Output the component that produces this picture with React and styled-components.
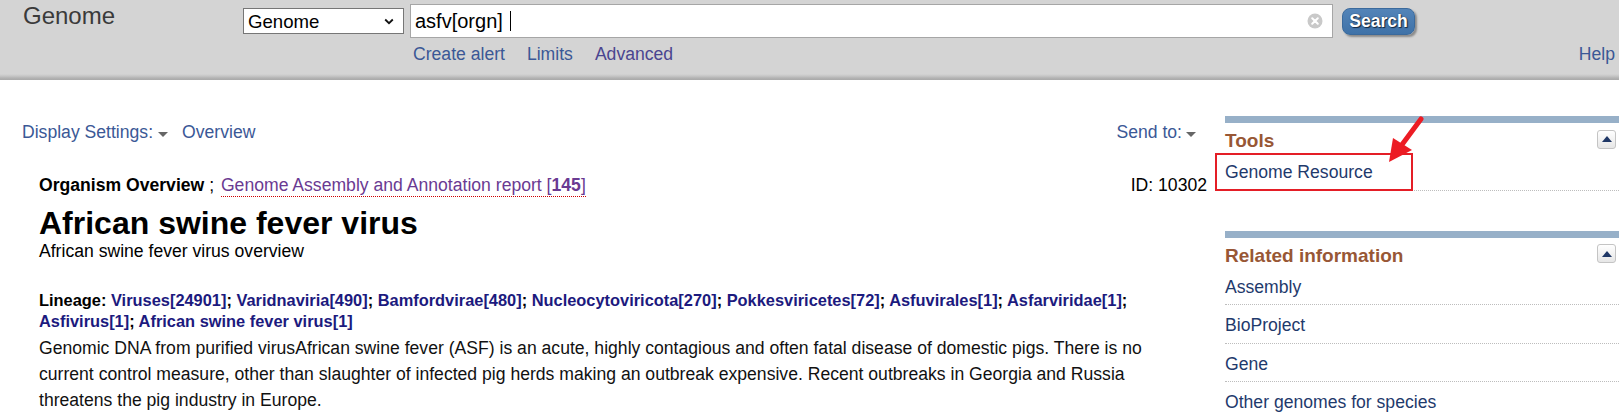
import React from "react";
import styled, { createGlobalStyle } from "styled-components";

const GlobalStyle = createGlobalStyle`
  html, body {
    margin: 0;
    padding: 0;
    background: #fff;
    overflow: hidden;
  }
  body {
    font-family: "Liberation Sans", Arial, sans-serif;
    font-size: 17.6px;
    color: #000;
  }
`;

const lineage = [
  ["Viruses", "24901"],
  ["Varidnaviria", "490"],
  ["Bamfordvirae", "480"],
  ["Nucleocytoviricota", "270"],
  ["Pokkesviricetes", "72"],
  ["Asfuvirales", "1"],
  ["Asfarviridae", "1"],
  ["Asfivirus", "1"],
  ["African swine fever virus", "1"],
];

const related = ["Assembly", "BioProject", "Gene", "Other genomes for species"];

const App = () => {
  return (
    <>
      <GlobalStyle />
      <Header>
        <Brand>Genome</Brand>
        <SearchCol>
          <SearchRow>
            <SelectWrap>
              <DbSelect defaultValue="genome">
                <option value="genome">Genome</option>
              </DbSelect>
              <Chevron width="10" height="7" viewBox="0 0 10 7">
                <path d="M1.2 1.5 L5 5.2 L8.8 1.5" fill="none" stroke="#111" strokeWidth="1.8" />
              </Chevron>
            </SelectWrap>
            <QueryBox>
              <QueryText>asfv[orgn]</QueryText>
              <Caret />
              <ClearIcon>
                <svg width="16" height="16" viewBox="0 0 16 16">
                  <circle cx="8" cy="8" r="7.5" fill="#c9c9c9" />
                  <path d="M5.2 5.2 L10.8 10.8 M10.8 5.2 L5.2 10.8" stroke="#fff" strokeWidth="2" strokeLinecap="round" />
                </svg>
              </ClearIcon>
            </QueryBox>
            <SearchButton>Search</SearchButton>
          </SearchRow>
          <SubLinks>
            <HeadLink>Create alert</HeadLink>
            <HeadLink>Limits</HeadLink>
            <HeadLink visited>Advanced</HeadLink>
          </SubLinks>
        </SearchCol>
        <Help>Help</Help>
      </Header>

      <Page>
        <MainCol>
          <Toolbar>
            <ToolGroup>
              <ToolLink>Display Settings:</ToolLink>
              <DropTriangle />
              <ToolLink>Overview</ToolLink>
            </ToolGroup>
            <ToolGroup>
              <ToolLink>Send to:</ToolLink>
              <DropTriangle />
            </ToolGroup>
          </Toolbar>

          <Content>
            <OrgRow>
              <span>
                <b>Organism Overview</b> ;{" "}
                <ReportLink>
                  Genome Assembly and Annotation report [<b>145</b>]
                </ReportLink>
              </span>
              <span>ID: 10302</span>
            </OrgRow>
            <Title>African swine fever virus</Title>
            <Subtitle>African swine fever virus overview</Subtitle>
            <Lineage>
              Lineage:{" "}
              {lineage.map(([name, count], i) => (
                <React.Fragment key={name}>
                  <TaxLink>
                    {name}[{count}]
                  </TaxLink>
                  {i < lineage.length - 1 ? "; " : ""}
                </React.Fragment>
              ))}
            </Lineage>
            <Description>
              Genomic DNA from purified virusAfrican swine fever (ASF) is an acute, highly contagious and
              often fatal disease of domestic pigs. There is no current control measure, other than
              slaughter of infected pig herds making an outbreak expensive. Recent outbreaks in Georgia
              and Russia threatens the pig industry in Europe.
            </Description>
          </Content>
        </MainCol>

        <Sidebar>
          <Portlet>
            <PortletHead>
              <PortletTitle>Tools</PortletTitle>
              <CollapseBtn />
            </PortletHead>
            <SideLink>Genome Resource</SideLink>
          </Portlet>
          <Portlet spaced>
            <PortletHead>
              <PortletTitle>Related information</PortletTitle>
              <CollapseBtn />
            </PortletHead>
            {related.map((r) => (
              <SideLink key={r}>{r}</SideLink>
            ))}
          </Portlet>

          <Highlight />
          <Arrow width="50" height="60" viewBox="0 0 50 60">
            <line x1="41" y1="9" x2="21" y2="36" stroke="#ec1c24" strokeWidth="5" strokeLinecap="round" />
            <polygon points="9,52 13,28 32,40" fill="#ec1c24" />
          </Arrow>
        </Sidebar>
      </Page>
    </>
  );
};

export default App;

const Header = styled.header`
  height: 80px;
  display: flex;
  align-items: flex-start;
  background: linear-gradient(
    to bottom,
    #d4d4d4 0,
    #d4d4d4 74px,
    #c6c6c6 76px,
    #b3b3b3 78px,
    #a9a9a9 80px
  );
`;

const Brand = styled.div`
  width: 220px;
  padding: 2px 0 0 23px;
  font-size: 24px;
  color: #3a3a3a;
`;

const SearchCol = styled.div`
  display: flex;
  flex-direction: column;
`;

const SearchRow = styled.div`
  display: flex;
  align-items: center;
  height: 34px;
  margin-top: 4px;
`;

const SelectWrap = styled.div`
  position: relative;
  display: flex;
`;

const DbSelect = styled.select`
  width: 161px;
  height: 26px;
  margin: 0;
  padding: 0 0 0 4px;
  appearance: none;
  border: 1px solid #767676;
  border-radius: 0;
  background: #fff;
  color: #000;
  font-family: "Liberation Sans", Arial, sans-serif;
  font-size: 18.6px;
`;

const Chevron = styled.svg`
  position: absolute;
  right: 10px;
  top: 10px;
  pointer-events: none;
`;

const QueryBox = styled.div`
  box-sizing: border-box;
  width: 923px;
  height: 34px;
  margin-left: 6px;
  padding-left: 4px;
  display: flex;
  align-items: center;
  background: #fff;
  border: 1px solid #a6a6a6;
`;

const QueryText = styled.span`
  font-size: 20px;
  color: #000;
`;

const Caret = styled.span`
  width: 1px;
  height: 20px;
  margin-left: 7px;
  background: #000;
`;

const ClearIcon = styled.span`
  display: flex;
  margin-left: auto;
  margin-right: 9px;
  filter: blur(0.4px);
`;

const SearchButton = styled.button`
  box-sizing: border-box;
  width: 73px;
  height: 27px;
  margin-left: 9px;
  padding: 0;
  border: 1px solid #3b6a9c;
  border-radius: 8px;
  background: linear-gradient(to bottom, #5384b8, #3f72a8);
  box-shadow: 2px 2px 2px rgba(0, 0, 0, 0.35);
  color: #fff;
  font-family: "Liberation Sans", Arial, sans-serif;
  font-size: 17.6px;
  font-weight: bold;
  text-shadow: 1px 1px 1px #13263d, 0 0 1px #13263d;
`;

const SubLinks = styled.div`
  display: flex;
  gap: 22px;
  margin-top: 6px;
  padding-left: 170px;
  line-height: 20px;
`;

const HeadLink = styled.a`
  color: ${(p) => (p.visited ? "#4a4590" : "#3b5896")};
  text-decoration: none;
`;

const Help = styled.a`
  margin: 44px 4px 0 auto;
  line-height: 20px;
  color: #3b5896;
`;

const Page = styled.div`
  display: flex;
  align-items: flex-start;
`;

const MainCol = styled.div`
  box-sizing: border-box;
  flex: 0 0 1210px;
  padding-left: 22px;
`;

const Toolbar = styled.div`
  display: flex;
  justify-content: space-between;
  align-items: center;
  margin-top: 42px;
  padding-right: 14px;
  line-height: 20px;
`;

const ToolGroup = styled.div`
  display: flex;
  align-items: center;
`;

const ToolLink = styled.a`
  color: #3b5896;
`;

const DropTriangle = styled.span`
  width: 0;
  height: 0;
  margin: 4px 14px 0 5px;
  border-left: 5px solid transparent;
  border-right: 5px solid transparent;
  border-top: 5px solid #666;
  &:last-child {
    margin-right: 0;
    margin-left: 4px;
  }
`;

const Content = styled.div`
  padding: 0 3px 0 17px;
`;

const OrgRow = styled.div`
  display: flex;
  justify-content: space-between;
  margin-top: 33px;
  line-height: 20px;
`;

const ReportLink = styled.a`
  margin-left: 2px;
  color: #6a3a92;
  border-bottom: 1px dotted #c00;
  padding-bottom: 1px;
`;

const Title = styled.h1`
  margin: 11px 0 0;
  font-size: 32px;
  line-height: 35px;
  font-weight: bold;
`;

const Subtitle = styled.div`
  line-height: 20px;
`;

const Lineage = styled.div`
  max-width: 1125px;
  margin-top: 29px;
  font-size: 16.4px;
  font-weight: bold;
  line-height: 21px;
`;

const TaxLink = styled.a`
  color: #1c1a7e;
`;

const Description = styled.p`
  max-width: 1125px;
  margin: 3px 0 0;
  line-height: 26px;
  color: #111;
`;

const Sidebar = styled.aside`
  position: relative;
  flex: 0 0 394px;
  margin: 36px 0 0 15px;
`;

const Portlet = styled.section`
  border-top: 7px solid #97b0c8;
  margin-top: ${(p) => (p.spaced ? "40px" : "0")};
`;

const PortletHead = styled.div`
  display: flex;
  justify-content: space-between;
  align-items: center;
  height: 22px;
  margin-top: 7px;
`;

const PortletTitle = styled.h3`
  margin: 0;
  font-size: 19px;
  font-weight: bold;
  color: #985735;
`;

const CollapseBtn = styled.span`
  box-sizing: border-box;
  width: 19px;
  height: 19px;
  margin: -4px 3px 0 0;
  display: flex;
  align-items: center;
  justify-content: center;
  border: 1px solid #c4c4c4;
  border-radius: 3px;
  background: linear-gradient(to bottom, #ffffff, #e6e6e6);
  &::after {
    content: "";
    width: 0;
    height: 0;
    border-left: 5px solid transparent;
    border-right: 5px solid transparent;
    border-bottom: 6px solid #1f3766;
  }
`;

const SideLink = styled.a`
  display: block;
  padding: 10px 0 7.5px;
  line-height: 20px;
  color: #1f3a6c;
  border-bottom: 1px dotted #bdbdbd;
`;

const Highlight = styled.div`
  position: absolute;
  left: -10px;
  top: 37px;
  width: 198px;
  height: 38px;
  box-sizing: border-box;
  border: 2px solid #e41e26;
  pointer-events: none;
`;

const Arrow = styled.svg`
  position: absolute;
  left: 155px;
  top: -6px;
`;
